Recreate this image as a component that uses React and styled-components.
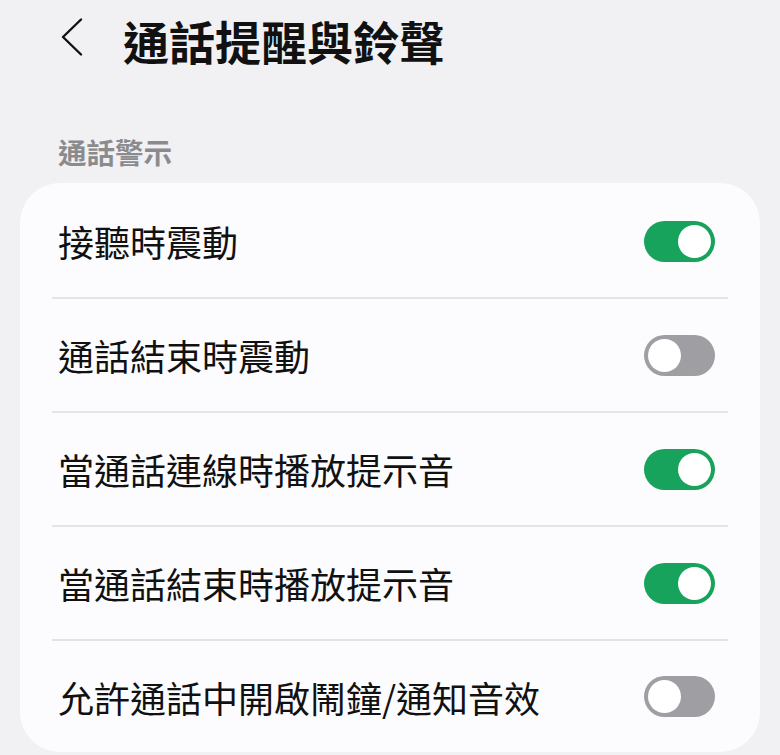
import React from "react";
import styled, { createGlobalStyle } from "styled-components";

const Global = createGlobalStyle`
  html, body { margin: 0; padding: 0; background: #f1f1f3; }
  body { font-family: "Noto Sans CJK TC", "Noto Sans", sans-serif; color: #111; }
`;

const Page = styled.div`
  width: 780px;
  height: 755px;
  overflow: hidden;
  background: #f1f1f3;
`;

const Header = styled.header`
  display: flex;
  align-items: center;
  height: 80px;
  padding-left: 60px;
  gap: 39px;
`;

const BackButton = styled.button`
  border: 0;
  background: none;
  padding: 0;
  width: 24px;
  height: 40px;
  margin-top: -7px;
  display: flex;
  align-items: center;
  justify-content: center;
  color: #111;
`;

const Title = styled.h1`
  margin: 0;
  font-size: 46px;
  font-weight: 700;
  line-height: 1;
`;

const SectionLabel = styled.div`
  height: 103px;
  box-sizing: border-box;
  display: flex;
  align-items: flex-end;
  padding: 0 0 16px 58px;
  font-size: 28.5px;
  font-weight: 700;
  color: #8b8b8e;
  line-height: 30px;
`;

const Card = styled.section`
  margin: 0 20px;
  padding-top: 2px;
  background: #fcfcfe;
  border-radius: 40px;
  display: flex;
  flex-direction: column;
`;

const Row = styled.div`
  display: flex;
  align-items: center;
  justify-content: space-between;
  height: ${(p) => (p.$last ? 111 : 112)}px;
  padding: 0 45px 0 38px;
`;

const Label = styled.span`
  font-size: 36px;
  font-weight: 400;
  line-height: 1;
  color: #111;
`;

const Divider = styled.div`
  height: 2px;
  background: #e4e4e6;
  margin: 0 32px;
`;

const Track = styled.div`
  width: 71px;
  height: 41px;
  border-radius: 21px;
  box-sizing: border-box;
  background: ${(p) => (p.$on ? "#17a35b" : "#9e9ea3")};
  display: flex;
  align-items: center;
  justify-content: ${(p) => (p.$on ? "flex-end" : "flex-start")};
  padding: 0 4px;
`;

const Knob = styled.div`
  width: 33px;
  height: 33px;
  border-radius: 50%;
  background: #fff;
`;

const Toggle = ({ on }) => (
  <Track $on={on}>
    <Knob />
  </Track>
);

const items = [
  ["接聽時震動", true],
  ["通話結束時震動", false],
  ["當通話連線時播放提示音", true],
  ["當通話結束時播放提示音", true],
  ["允許通話中開啟鬧鐘/通知音效", false],
];

export default function App() {
  return (
    <Page>
      <Global />
      <Header>
        <BackButton aria-label="back">
          <svg width="22" height="38" viewBox="0 0 22 38">
            <path d="M20 1.5 L2 19 L20 36.5" fill="none" stroke="#111" strokeWidth="2.4" strokeLinecap="round" strokeLinejoin="round" />
          </svg>
        </BackButton>
        <Title>通話提醒與鈴聲</Title>
      </Header>
      <SectionLabel>通話警示</SectionLabel>
      <Card>
        {items.map(([t, on], i) => (
          <React.Fragment key={t}>
            {i > 0 && <Divider />}
            <Row $last={i === items.length - 1}>
              <Label>{t}</Label>
              <Toggle on={on} />
            </Row>
          </React.Fragment>
        ))}
      </Card>
    </Page>
  );
}
